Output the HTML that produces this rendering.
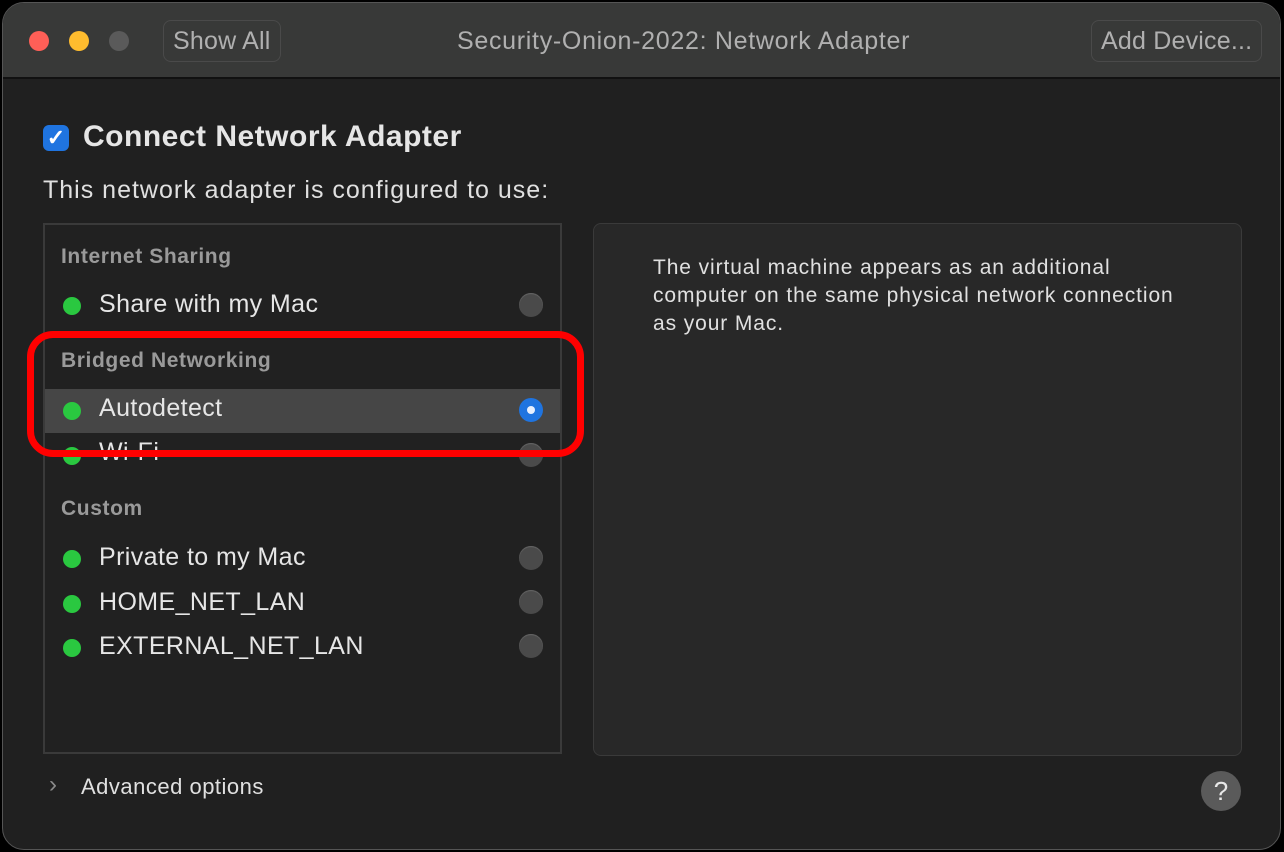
<!DOCTYPE html>
<html><head><meta charset="utf-8"><style>
*{margin:0;padding:0;box-sizing:border-box}
body{width:1284px;height:852px;background:#000;font-family:"Liberation Sans",sans-serif;position:relative;overflow:hidden}
.win{position:absolute;left:2px;top:2px;width:1279px;height:848px;background:#202020;border-radius:22px;border:1px solid #555;overflow:hidden}
.tb{position:absolute;left:0;top:0;width:100%;height:76px;background:#383938;border-bottom:2px solid #111}
.dot{position:absolute;top:28px;width:20px;height:20px;border-radius:50%}
.btn{position:absolute;top:17px;height:42px;border:1px solid #4a4a4a;border-radius:8px;color:#b0b0b0;font-size:25px;line-height:40px;padding:0 9px;letter-spacing:0.2px}
.title{position:absolute;top:24px;left:454px;color:#b0b0b0;font-size:25px;letter-spacing:0.7px;white-space:nowrap}
.t{position:absolute;white-space:nowrap}
.gd{position:absolute;width:18px;height:18px;border-radius:50%;background:#2ac840;left:60px}
.rd{position:absolute;width:24px;height:24px;border-radius:50%;background:#4a4a4a;left:516px;box-shadow:inset 0 1px 1px #666}
.lbl{color:#e6e6e6;font-size:25px;letter-spacing:0.4px;left:96px}
.hd{color:#9a9a9a;font-size:21px;letter-spacing:0.6px;font-weight:bold;left:58px}
</style></head><body>
<div class="win">
 <div class="tb">
  <div class="dot" style="left:26px;background:#fe5f57"></div>
  <div class="dot" style="left:66px;background:#febc2e"></div>
  <div class="dot" style="left:106px;background:#5a5a5a"></div>
  <div class="btn" style="left:160px">Show All</div>
  <div class="title">Security-Onion-2022: Network Adapter</div>
  <div class="btn" style="left:1088px">Add Device...</div>
 </div>
 <div style="position:absolute;left:40px;top:122px;width:26px;height:26px;border-radius:6px;background:#1f74e0;color:#fff;font-size:22px;line-height:26px;text-align:center;font-weight:bold">✓</div>
 <div class="t" style="left:80px;top:117px;color:#e6e6e6;font-size:30px;letter-spacing:0.5px;font-weight:bold">Connect Network Adapter</div>
 <div class="t" style="left:40px;top:173px;color:#e0e0e0;font-size:25px;letter-spacing:1px">This network adapter is configured to use:</div>
 <div style="position:absolute;left:40px;top:220px;width:519px;height:531px;border:2px solid #3a3a3a;background:#212121"></div>
 <div style="position:absolute;left:590px;top:220px;width:649px;height:533px;border:1px solid #3a3a3a;border-radius:8px;background:#282828"></div>
 <div class="t" style="left:650px;top:251px;color:#e0e0e0;font-size:21px;letter-spacing:0.9px;line-height:28px">The virtual machine appears as an additional<br>computer on the same physical network connection<br>as your Mac.</div>
 <div class="t hd" style="top:242px">Internet Sharing</div>
 <div class="gd" style="top:294px"></div><div class="t lbl" style="top:287px">Share with my Mac</div><div class="rd" style="top:290px"></div>
 <div class="t hd" style="top:346px">Bridged Networking</div>
 <div style="position:absolute;left:42px;top:386px;width:515px;height:44px;background:#464646"></div>
 <div class="gd" style="top:399px"></div><div class="t lbl" style="top:391px">Autodetect</div>
 <div class="rd" style="top:395px;background:#1f74e0;box-shadow:none"><div style="position:absolute;left:8px;top:8px;width:8px;height:8px;border-radius:50%;background:#e8f0ff"></div></div>
 <div class="gd" style="top:444px"></div><div class="t lbl" style="top:435px">Wi-Fi</div><div class="rd" style="top:440px"></div>
 <div class="t hd" style="top:494px">Custom</div>
 <div class="gd" style="top:547px"></div><div class="t lbl" style="top:540px">Private to my Mac</div><div class="rd" style="top:543px"></div>
 <div class="gd" style="top:592px"></div><div class="t lbl" style="top:585px">HOME_NET_LAN</div><div class="rd" style="top:587px"></div>
 <div class="gd" style="top:636px"></div><div class="t lbl" style="top:629px">EXTERNAL_NET_LAN</div><div class="rd" style="top:631px"></div>
 <div style="position:absolute;left:24px;top:328px;width:557px;height:126px;border:7px solid #ff0000;border-radius:26px"></div>
 <div class="t" style="left:46px;top:768px;color:#8a8a8a;font-size:24px">›</div>
 <div class="t" style="left:78px;top:771px;color:#e0e0e0;font-size:22px;letter-spacing:0.5px">Advanced options</div>
 <div style="position:absolute;left:1198px;top:768px;width:40px;height:40px;border-radius:50%;background:#5a5a5a;color:#e8e8e8;font-size:26px;text-align:center;line-height:40px">?</div>
</div>
</body></html>
